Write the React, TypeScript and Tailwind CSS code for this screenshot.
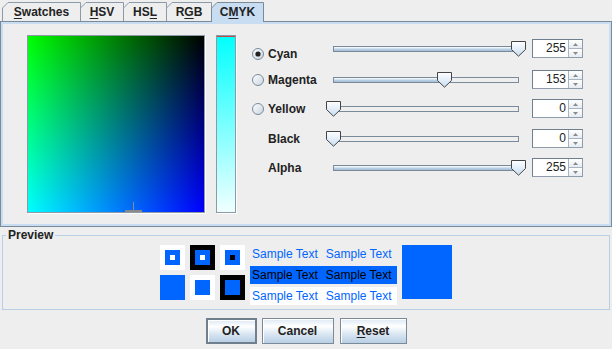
import React from 'react';

const tabs = [
  { label: 'Swatches', u: 0, w: 79, cls: 'w-[79px]' },
  { label: 'HSV', u: 0, w: 44, cls: 'w-[44px]' },
  { label: 'HSL', u: 2, w: 44, cls: 'w-[44px]' },
  { label: 'RGB', u: 1, w: 46, cls: 'w-[46px]' },
  { label: 'CMYK', u: 1, w: 53, cls: 'w-[53px]', active: true },
];

const rows = [
  { label: 'Cyan', value: 255, radio: true, checked: true, mt: 'mt-0', lp: 'pt-[9px]' },
  { label: 'Magenta', value: 153, radio: true, mt: 'mt-[12px]', lp: 'pt-[4px]' },
  { label: 'Yellow', value: 0, radio: true, mt: 'mt-[10px]', lp: 'pt-[4px]' },
  { label: 'Black', value: 0, mt: 'mt-[11px]', lp: 'pt-[4px]' },
  { label: 'Alpha', value: 255, mt: 'mt-[10px]', lp: 'pt-[4px]' },
];

function Mn({ text, u }: { text: string; u: number }) {
  return (
    <>
      {text.slice(0, u)}
      <span className="underline underline-offset-[2px]">{text[u]}</span>
      {text.slice(u + 1)}
    </>
  );
}

function Radio({ checked }: { checked?: boolean }) {
  return (
    <svg width="12" height="12" viewBox="0 0 12 12">
      <defs>
        <linearGradient id="rg" x1="0" y1="0" x2="1" y2="1">
          <stop offset="0" stopColor="#ffffff" />
          <stop offset="1" stopColor="#c8d3de" />
        </linearGradient>
      </defs>
      <circle cx="6" cy="6" r="5.5" fill="url(#rg)" stroke="#7a8a99" />
      {checked && <circle cx="6" cy="6" r="2.6" fill="#222222" />}
    </svg>
  );
}

function Slider({ value }: { value: number }) {
  const left = Math.round((value / 255) * 185);
  return (
    <div className="relative h-[19px] w-[200px]">
      <div className="absolute left-[7px] right-[7px] top-[7px] h-[6px] border border-[#7a8a99] bg-[#eeeeee]">
        <div
          className="h-full bg-[linear-gradient(#ffffff,#b8cfe5_60%,#a3bcd6)]"
          style={{ width: left }}
        />
      </div>
      <svg className="absolute top-[2px]" style={{ left }} width="15" height="16" viewBox="0 0 15 16">
        <defs>
          <linearGradient id="tg" x1="0" y1="0" x2="0" y2="1">
            <stop offset="0" stopColor="#ffffff" />
            <stop offset="1" stopColor="#c8ddf2" />
          </linearGradient>
        </defs>
        <path d="M0.5 0.5H14.5V8.5L7.5 15.2L0.5 8.5Z" fill="url(#tg)" stroke="#444444" />
      </svg>
    </div>
  );
}

function Spinner({ value }: { value: number }) {
  return (
    <div className="flex h-[19px] w-[51px] border border-[#8e9cab] border-t-[#6f7f8e] border-l-[#6f7f8e] bg-white">
      <div className="flex-1 pr-[2px] text-right text-[12px] leading-[17px] text-[#222]">{value}</div>
      <div className="flex w-[14px] flex-col border-l border-[#a8b4c0]">
        <div className="flex flex-1 items-center justify-center border-b border-[#a8b4c0] bg-[linear-gradient(#ffffff,#e6ecf2)]">
          <svg width="5" height="3" viewBox="0 0 5 3">
            <path d="M2.5 0L5 3H0Z" fill="#8a8a8a" />
          </svg>
        </div>
        <div className="flex flex-1 items-center justify-center bg-[linear-gradient(#ffffff,#e6ecf2)]">
          <svg width="5" height="3" viewBox="0 0 5 3">
            <path d="M0 0H5L2.5 3Z" fill="#8a8a8a" />
          </svg>
        </div>
      </div>
    </div>
  );
}

function Square({ outer, mid, inner }: { outer: string; mid?: string; inner?: string }) {
  return (
    <div className={`flex h-[25px] w-[25px] items-center justify-center ${outer}`}>
      {mid && (
        <div className={`flex h-[15px] w-[15px] items-center justify-center ${mid}`}>
          {inner && <div className={`h-[5px] w-[5px] ${inner}`} />}
        </div>
      )}
    </div>
  );
}

const btn =
  'h-[26px] text-[12px] font-bold text-[#222] bg-[linear-gradient(#dde8f3,#ffffff_30%,#dde8f3_60%,#b8cfe5)] shadow-[inset_1px_1px_0_#ffffff]';

export default function App() {
  return (
    <div className="flex h-[349px] w-[612px] flex-col overflow-hidden bg-[#eeeeee] font-['Liberation_Sans',Arial,sans-serif] text-[12px] text-[#333]">
      {/* tabs */}
      <div className="flex h-[21px] items-end pl-[2px]">
        {tabs.map((t, i) => (
          <div
            key={t.label}
            className={`relative flex items-center justify-center font-bold ${t.cls} ${i > 0 ? '-ml-px' : ''} ${
              t.active ? 'z-10 -mb-px h-[20px] pb-px' : 'h-[19px]'
            }`}
          >
            <svg className="absolute left-0 top-0" width={t.w} height={t.active ? 20 : 19}>
              <path
                d={`M0.5 ${t.active ? 20 : 19}V6L6 0.5H${t.w - 0.5}V${t.active ? 20 : 19}`}
                fill={t.active ? '#c8ddf2' : '#eeeeee'}
                stroke={t.active ? '#7a8a99' : '#8c9aa8'}
              />
            </svg>
            <span className="relative text-[#222]">
              <Mn text={t.label} u={t.u} />
            </span>
          </div>
        ))}
      </div>

      {/* tab content */}
      <div className="h-[206px] border border-[#7a8a99]">
        <div className="flex h-full border-2 border-[#c8ddf2] pl-[24px] pt-[11px]">
          <div className="relative h-[178px] w-[178px] border border-[#8c9aa8] bg-[image:linear-gradient(to_right,#00ff00,#000000),linear-gradient(to_bottom,#000000,#0000ff)] bg-blend-screen shadow-[1px_1px_0_#ffffff]">
            <svg className="absolute bottom-0 left-[97px]" width="17" height="10">
              <rect x="8" y="0" width="1" height="10" fill="#8a8a8a" />
              <rect x="0" y="8" width="17" height="2" fill="#8a8a8a" />
            </svg>
          </div>

          <div className="ml-[11px] h-[178px] w-[20px] border border-[#8c9aa8] bg-[linear-gradient(#00ffff,#f0ffff)] shadow-[1px_1px_0_#ffffff]">
            <div className="h-px bg-[#c04848]" />
          </div>

          <div className="ml-[16px] mt-[4px] flex flex-col">
            {rows.map((r) => (
              <div key={r.label} className={`flex h-[19px] ${r.mt}`}>
                <div className={`flex w-[74px] items-center gap-[4px] self-start font-bold ${r.lp}`}>
                  <div className="flex h-[12px] w-[12px]">{r.radio && <Radio checked={r.checked} />}</div>
                  <span className="leading-[12px] text-[#222]">{r.label}</span>
                </div>
                <Slider value={r.value} />
                <div className="ml-[6px]">
                  <Spinner value={r.value} />
                </div>
              </div>
            ))}
          </div>
        </div>
      </div>

      {/* preview */}
      <fieldset className="mx-[2px] mt-px border border-[#b8cfe5] px-0 pb-[4px] pt-[3px]">
        <legend className="ml-[3px] px-[2px] text-[12px] font-bold leading-[14px] text-[#222]">Preview</legend>
        <div className="flex justify-center gap-[5px]">
          <div className="grid h-[55px] grid-cols-3 gap-[5px]">
            <Square outer="bg-white" mid="bg-[#0066ff]" inner="bg-white" />
            <Square outer="bg-black" mid="bg-[#0066ff]" inner="bg-white" />
            <Square outer="bg-white" mid="bg-[#0066ff]" inner="bg-black" />
            <Square outer="bg-[#0066ff]" />
            <Square outer="bg-white" mid="bg-[#0066ff]" />
            <Square outer="bg-black" mid="bg-[#0066ff]" />
          </div>
          <div className="flex w-[147px] flex-col gap-[3px]">
            <div className="flex h-[18px] items-center gap-[8px] pl-[2px] text-[#0066ff]">
              <span>Sample Text</span>
              <span>Sample Text</span>
            </div>
            <div className="flex h-[18px] items-center gap-[8px] bg-[#0066ff] pl-[2px] text-black">
              <span>Sample Text</span>
              <span>Sample Text</span>
            </div>
            <div className="flex h-[18px] items-center gap-[8px] bg-white pl-[2px] text-[#0066ff]">
              <span>Sample Text</span>
              <span>Sample Text</span>
            </div>
          </div>
          <div className="h-[54px] w-[50px] bg-[#0066ff]" />
        </div>
      </fieldset>

      {/* buttons */}
      <div className="mt-[8px] flex justify-center">
        <button className={`${btn} w-[51px] border-2 border-[#6f7f8e]`}>OK</button>
        <button className={`${btn} ml-[5px] w-[72px] border border-[#7a8a99]`}>Cancel</button>
        <button className={`${btn} ml-[6px] w-[67px] border border-[#7a8a99]`}>
          <Mn text="Reset" u={0} />
        </button>
      </div>
    </div>
  );
}
